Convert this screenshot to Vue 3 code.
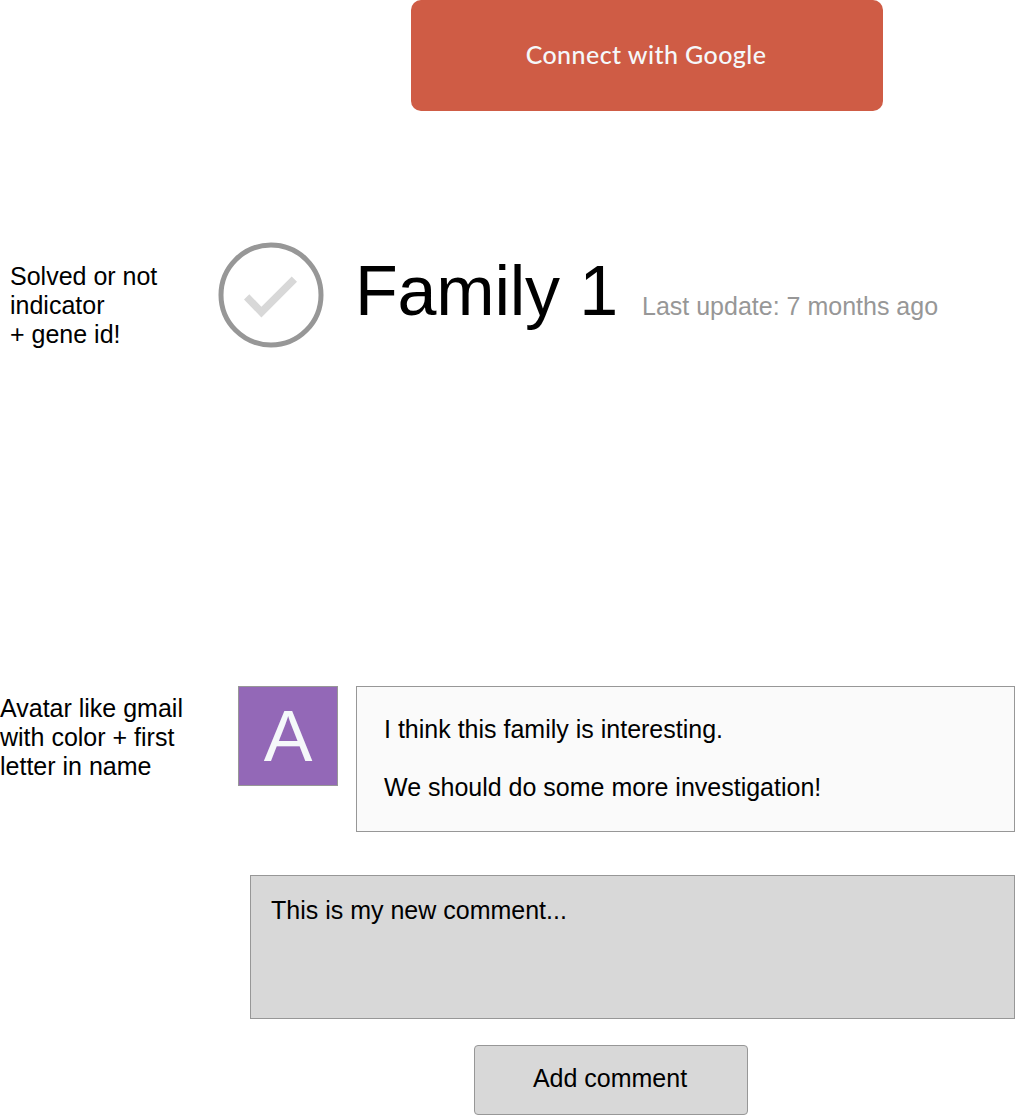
<script setup>
const solvedNote = ['Solved or not', 'indicator', '+ gene id!']
const avatarNote = ['Avatar like gmail', 'with color + first', 'letter in name']
</script>

<template>
  <main class="board">
    <button class="google">Connect with Google</button>
    <section class="family">
      <p class="note solved"><span v-for="l in solvedNote" :key="l">{{ l }}</span></p>
      <svg class="check" viewBox="0 0 106 106">
        <circle cx="53" cy="53" r="50" fill="none" stroke="#979797" stroke-width="5" />
        <path d="M31.3 52.2 26 57.4 43.4 75.6 79 39.7 73.7 34.6 43.4 64.8Z" fill="#d8d8d8" />
      </svg>
      <h1>Family 1</h1>
      <span class="updated">Last update: 7 months ago</span>
    </section>
    <section class="comment">
      <p class="note"><span v-for="l in avatarNote" :key="l">{{ l }}</span></p>
      <div class="avatar"><span>A</span></div>
      <div class="bubble"><p>I think this family is interesting.</p><p>We should do some more investigation!</p></div>
    </section>
    <div class="field">This is my new comment...</div>
    <button class="add">Add comment</button>
  </main>
</template>

<style>
body { margin: 0; background: #fff; }
</style>

<style scoped>
.board { width: 1015px; height: 1115px; overflow: hidden; display: flex; flex-direction: column; font: 25px/29px "Liberation Sans", Arial, sans-serif; color: #000; }
.board * { box-sizing: border-box; }
p, h1 { margin: 0; }
button { font: inherit; color: inherit; padding: 0; }
.note span { display: block; white-space: nowrap; }
.google { width: 472px; height: 111px; margin-left: 411px; padding: 0 2px 3px 0; border: 0; border-radius: 10px; background: #cf5c45; color: #f5f8fa; font: 500 25px/30px Lato, sans-serif; letter-spacing: 0.43px; flex: none; }
.family { display: flex; align-items: flex-start; height: 106px; margin-top: 131px; flex: none; }
.solved { width: 208px; margin: 20px 0 0 10px; }
.check { width: 106px; height: 106px; flex: none; }
h1 { width: 287px; margin: 9px 0 0 31px; font-size: 70px; line-height: 80px; font-weight: 400; letter-spacing: -0.2px; white-space: nowrap; }
.updated { margin-top: 50px; color: #979797; white-space: nowrap; }
.comment { display: flex; align-items: flex-start; height: 146px; margin-top: 338px; flex: none; }
.comment .note { width: 238px; padding-top: 8px; }
.avatar { width: 100px; height: 100px; border: 1px solid #979797; background: #9368b7; color: #f5f8fa; font-size: 73px; line-height: 98px; text-align: center; }
.bubble { width: 659px; height: 146px; margin-left: 18px; border: 1px solid #979797; background: #fafafa; padding: 28px 27px; }
.bubble p + p { margin-top: 29px; }
.field { width: 765px; height: 144px; margin: 43px 0 0 250px; padding: 20px; border: 1px solid #979797; background: #d8d8d8; flex: none; }
.add { width: 274px; height: 70px; margin: 26px 0 0 474px; padding: 0 2px 3px 0; border: 1px solid #979797; border-radius: 4px; background: #d8d8d8; flex: none; }
</style>
